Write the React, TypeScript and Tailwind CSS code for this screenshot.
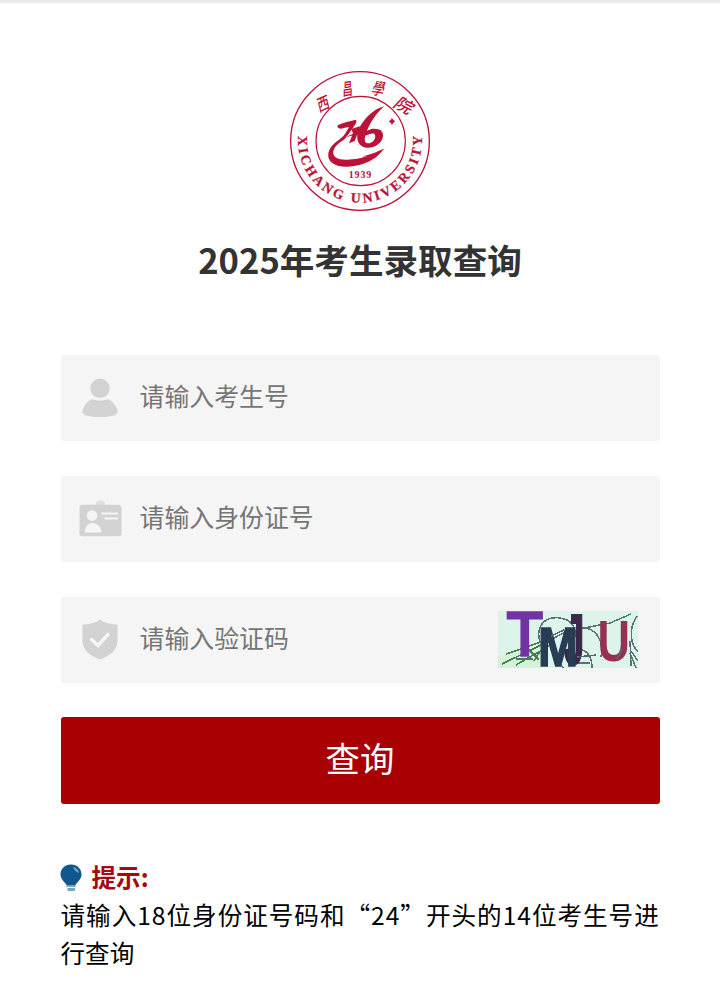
import type { ReactNode } from 'react';

function Seal() {
  return (
    <svg viewBox="0 0 480 480" className="h-[160px] w-[160px]" fill="#bd1238" aria-label="西昌学院">
      <circle cx="240" cy="243" r="208" fill="none" stroke="#bd1238" strokeWidth="4" />
      <circle cx="242" cy="243" r="134" fill="none" stroke="#bd1238" strokeWidth="3.5" />
      <defs>
        <path id="ring" d="M54.500 228 A186 186 0 1 0 425.500 228" />
      </defs>
      <text fontFamily="Liberation Serif, serif" fontWeight="700" fontSize="41" stroke="#bd1238" strokeWidth=".8">
        <textPath href="#ring" textLength="612" lengthAdjust="spacing">XICHANG UNIVERSITY</textPath>
      </text>
      <g fontFamily="Noto Sans CJK TC, sans-serif" fontSize="50" fontWeight="500" textAnchor="middle" fontStyle="italic">
        <text transform="translate(134 149) rotate(-24) scale(.75 1)">西</text>
        <text transform="translate(203 105) rotate(-8) scale(.62 1)">昌</text>
        <text transform="translate(290 104) rotate(8) scale(.75 1)">學</text>
        <text transform="translate(360 151) rotate(28) scale(1.100 1)">院</text>
      </g>
      <path d="M174 196C189 187 211 184 224 180C232 178 230 187 226 193C215 210 204 226 192 239C175 249 164 259 160 273C156 291 174 300 202 299C243 298 277 285 309 267C302 284 279 302 246 313C213 323 173 325 154 307C138 291 144 267 162 251C173 241 187 235 196 220L207 202C194 201 184 209 177 205C171 202 171 198 174 196Z" />
      <path d="M312 139C278 149 248 178 234 214C227 240 236 260 258 263C286 266 310 246 309 225C309 209 287 205 263 218L251 229C261 223 281 215 285 225C289 237 277 251 263 250C251 249 253 230 260 215C271 186 288 162 312 139Z" />
      <path d="M199 232C218 219 233 216 251 216L274 207C286 204 301 208 307 214C291 213 274 220 260 226C239 220 218 225 199 232Z" />
      <path d="M214 207L242 198L224 243L207 250L219 220ZM247 290C277 282 298 273 315 265C299 280 275 290 247 290Z" />
      <path d="M336 174Q339 181 346 184Q339 188 336 195Q333 188 326 184Q333 181 336 174Z" />
      <text x="206" y="355" fontFamily="Liberation Serif, serif" fontWeight="700" fontSize="30" textLength="68" lengthAdjust="spacing">1939</text>
    </svg>
  );
}

function UserIcon() {
  return (
    <svg viewBox="0 0 44 44" className="h-[44px] w-[44px]" fill="#d2d2d2">
      <circle cx="22" cy="12.3" r="9.700" />
      <path d="M14.500 23.200C17.500 25 26.500 25 29.500 23.200C35 25 39.500 31 39.500 36.300C39.500 39.500 32 41 22 41S4.500 39.500 4.500 36.300C4.500 31 9 25 14.500 23.200Z" />
    </svg>
  );
}

function CardIcon() {
  return (
    <svg viewBox="0 0 44 44" className="h-[44px] w-[44px]" fill="#d2d2d2">
      <path d="M18 8V5.500a5 4 0 0 1 9 0V8Z" fill="#dedede" />
      <rect x="1.500" y="7.700" width="42" height="31.500" rx="3" />
      <g fill="#f5f5f5">
        <circle cx="14" cy="18.500" r="5.300" />
        <path d="M6.500 35.500C7 29 10.500 26 14.500 26S23 29 23.500 35.500Z" />
        <path d="M23.500 15.500H40V17.500H23.500ZM26.500 20.500H40V22.500H26.500Z" />
      </g>
    </svg>
  );
}

function ShieldIcon() {
  return (
    <svg viewBox="0 0 44 44" className="h-[44px] w-[44px]" fill="#d2d2d2">
      <path d="M22 1.500C26 5 33 6.500 39.500 6.500V23C39.500 33 30 38.500 22 41.500C14 38.500 4.500 33 4.500 23V6.500C11 6.500 18 5 22 1.500Z" />
      <path d="M12.500 20.500L20 27.500L31 15.500" fill="none" stroke="#f5f5f5" strokeWidth="3.500" />
    </svg>
  );
}

function Captcha() {
  return (
    <svg viewBox="0 0 140 57" className="-mt-[2px] h-[57px] w-[140px]" aria-label="验证码">
      <rect width="140" height="57" fill="#ddf4eb" />
      <path d="M0 45L44 35V57H0Z" fill="#d3f2d6" />
      <g fill="none" stroke="#477b55" strokeWidth="1.600" shapeRendering="crispEdges">
        <path d="M8 43L52 28M4 53L43 34M18 54L51 35M18 48H35M29 37L41 49" />
      </g>
      <g fill="none" stroke="#5d7078" strokeWidth="1.500" shapeRendering="crispEdges">
        <path d="M42 31C37 14 48 5 62 7S77 18 78 26M36 50C46 32 56 26 70 20M83 17C97 16 106 28 103 46M86 17L112 12L133 3M53 38L65 57M80 38C90 39 94 46 94 57M78 52H92M139 5C129 20 134 36 140 40M133 40L140 50M132 42L138 57M132 30L133 55" />
      </g>
      <g fontFamily="Liberation Sans, sans-serif">
        <text transform="translate(9 44) scale(.94 1)" fontSize="62" fontWeight="400" stroke="#7134a0" strokeWidth="3.500" fill="#7134a0">T</text>
        <text transform="translate(66 53) scale(.52 1)" fontSize="70" fontWeight="700" fill="#3c2949" stroke="#3c2949" strokeWidth="2">J</text>
        <text transform="translate(40 55) scale(.86 1)" fontSize="56" fontWeight="700" fill="#273d53" stroke="#273d53" strokeWidth="1.500">M</text>
        <text transform="translate(99.500 50) scale(.79 1)" fontSize="57" fontWeight="700" fill="#963154">U</text>
      </g>
      <path d="M79 46L98 44M119 48L124 38M53 25L66 19" fill="none" stroke="#586577" strokeWidth="1.500" shapeRendering="crispEdges" />
    </svg>
  );
}

function Bulb() {
  return (
    <svg viewBox="0 0 22 28" className="-ml-px h-[28px] w-[22px]">
      <path d="M11 .500C4.500 .500 .500 5 .500 10.500C.500 15.500 5 18 6.500 21H15.500C17 18 21.500 15.500 21.500 10.500C21.500 5 17.500 .500 11 .500Z" fill="#12578b" />
      <path d="M13 3Q18 4 19 9Q15 8 13 3Z" fill="#70a5ca" />
      <path d="M6.500 21H15.500V23H6.500ZM7.500 24H15V27H7.500Z" fill="#76a6bf" />
    </svg>
  );
}

function Field({ icon, placeholder, children }: { icon: ReactNode; placeholder: string; children?: ReactNode }) {
  return (
    <label className="flex h-[86px] items-center rounded-[3px] bg-[#f5f5f5] pr-[22px] pl-[17px]">
      {icon}
      <input
        placeholder={placeholder}
        className="ml-[18px] h-[50px] min-w-0 flex-1 bg-transparent pb-[7px] text-[24.9px] text-[#757575] outline-none placeholder:text-[#757575]"
      />
      {children}
    </label>
  );
}

export default function App() {
  return (
    <main
      lang="zh-CN"
      className="flex h-[1001px] w-[720px] flex-col overflow-hidden border-t-[3px] border-[#ebebeb] bg-white px-[60.5px] font-['Noto_Sans_CJK_SC',sans-serif]"
    >
      <header className="flex flex-col items-center pt-[57px]">
        <Seal />
        <h1 className="mt-[14px] text-[34.6px] leading-[50px] font-bold whitespace-nowrap text-[#333]">2025年考生录取查询</h1>
      </header>
      <form className="mt-[71px] flex flex-col gap-[35px]">
        <Field icon={<UserIcon />} placeholder="请输入考生号" />
        <Field icon={<CardIcon />} placeholder="请输入身份证号" />
        <Field icon={<ShieldIcon />} placeholder="请输入验证码">
          <Captcha />
        </Field>
        <button type="button" className="-mt-px h-[87px] rounded-[3px] bg-[#a80003] pb-[5px] text-[34.4px] text-white">
          查询
        </button>
      </form>
      <section className="mt-[53px] text-[24.6px] leading-[38px] text-black">
        <h2 className="flex items-center gap-[10px] font-bold text-[#a40a10]">
          <span className="pt-[3px]">
            <Bulb />
          </span>
          提示:
        </h2>
        <p className="whitespace-nowrap">
          <span className="tracking-[0.98px]">请输入18位身份证号码和“24”开头的14位考生号进</span>
          <br />
          行查询
        </p>
      </section>
    </main>
  );
}
